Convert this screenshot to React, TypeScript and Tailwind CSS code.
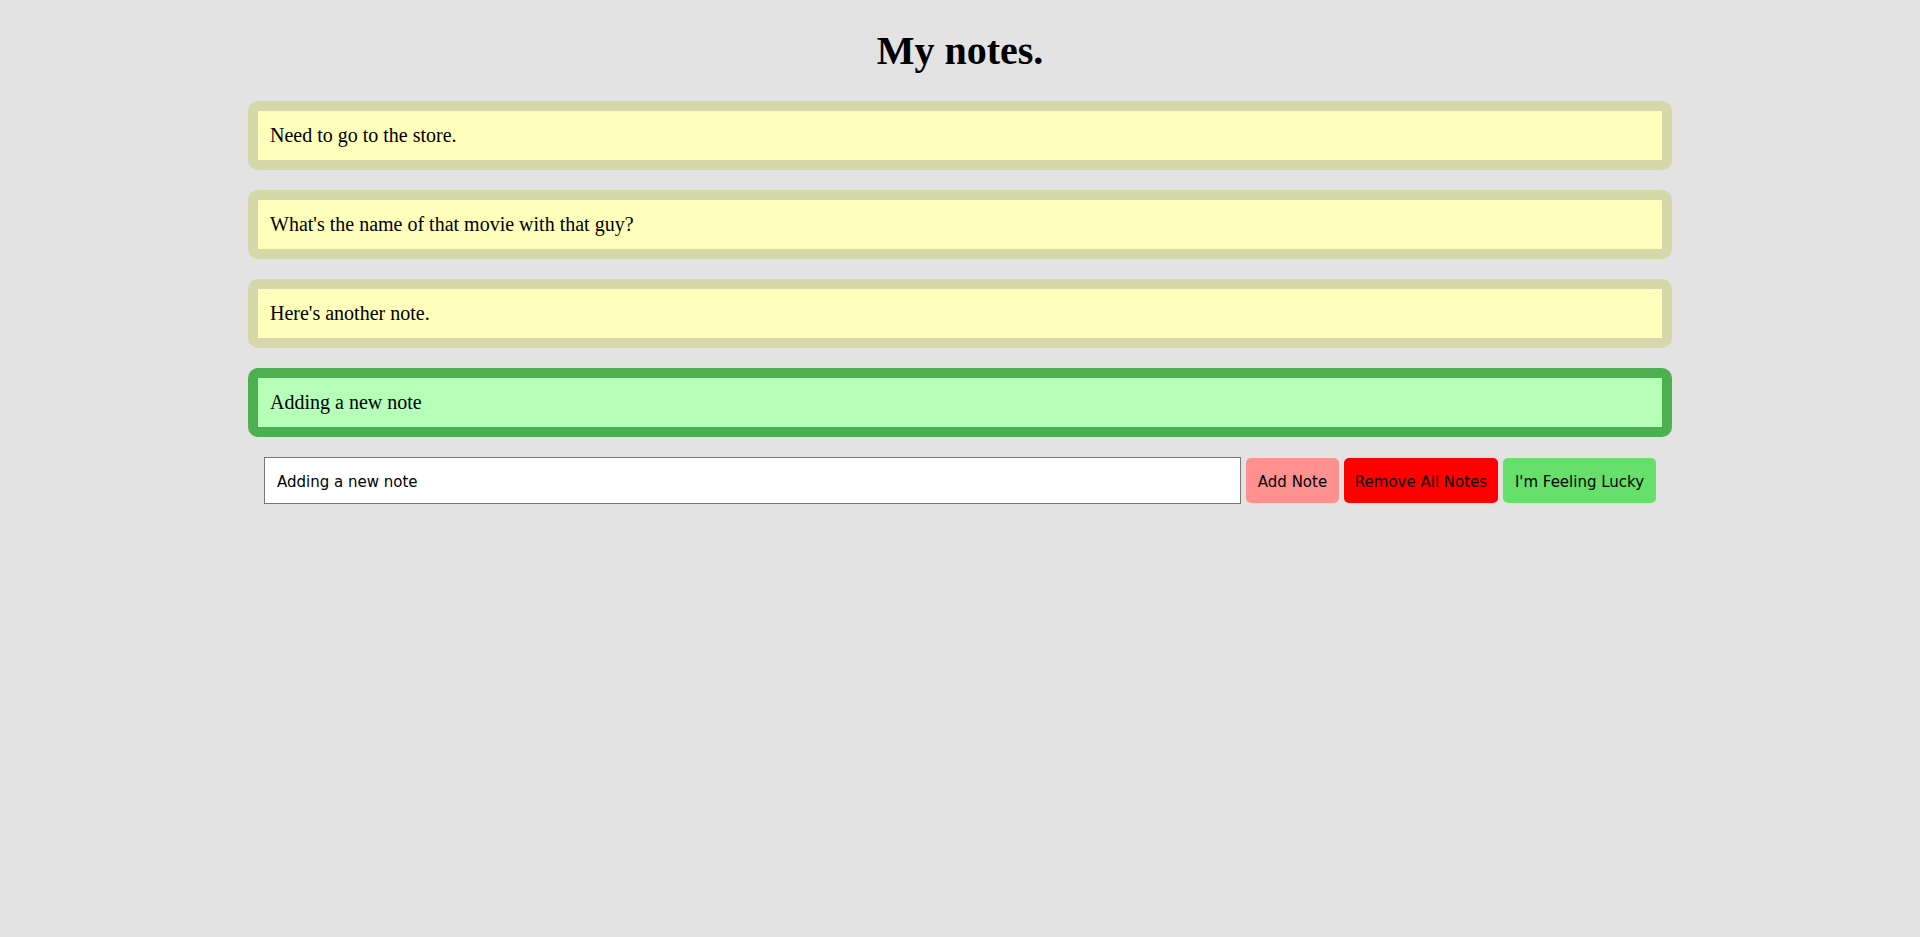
import React from 'react';

interface Note {
  id: number;
  text: string;
  fresh?: boolean;
}

const initialNotes: Note[] = [
  { id: 1, text: 'Need to go to the store.' },
  { id: 2, text: "What's the name of that movie with that guy?" },
  { id: 3, text: "Here's another note." },
  { id: 4, text: 'Adding a new note', fresh: true },
];

function NoteCard({ note }: { note: Note }) {
  const frame = note.fresh ? 'bg-[#4caf50]' : 'bg-[#d5d9a9]';
  const inner = note.fresh ? 'bg-[#b6ffb8]' : 'bg-[#ffffbb]';
  return (
    <div className={`${frame} rounded-[10px] p-[10px]`}>
      <div className={`${inner} px-[12px] py-[13px] text-[20px] leading-[23px] text-black`}>
        {note.text}
      </div>
    </div>
  );
}

export default function App() {
  const [notes] = React.useState<Note[]>(initialNotes);
  const [draft, setDraft] = React.useState('Adding a new note');

  return (
    <div
      className="min-h-[937px] w-full bg-[#e3e3e3] pt-[29px]"
      style={{ fontFamily: '"Liberation Serif", "Times New Roman", serif' }}
    >
      <h1 className="text-center text-[40px] font-bold leading-[44px] text-black">My notes.</h1>

      <div className="mx-auto mt-[28px] flex w-[1424px] flex-col gap-[20px]">
        {notes.map((note) => (
          <NoteCard key={note.id} note={note} />
        ))}

        <div
          className="mx-4 flex items-center gap-[5px] text-[15px] leading-[18px] text-black"
          style={{ fontFamily: '"DejaVu Sans", Verdana, sans-serif' }}
        >
          <input
            value={draft}
            onChange={(e) => setDraft(e.target.value)}
            className="h-[47px] flex-1 border border-[#767676] bg-white px-[12px] pt-[2px] text-[15px] text-black outline-none"
          />
          <button className="h-[45px] w-[93px] rounded-[5px] bg-[#ff9090] pt-[2px]">Add Note</button>
          <button className="h-[45px] w-[154px] rounded-[5px] bg-[#ff0000] pt-[2px]">Remove All Notes</button>
          <button className="h-[45px] w-[153px] rounded-[5px] bg-[#66e06a] pt-[2px]">I'm Feeling Lucky</button>
        </div>
      </div>
    </div>
  );
}
